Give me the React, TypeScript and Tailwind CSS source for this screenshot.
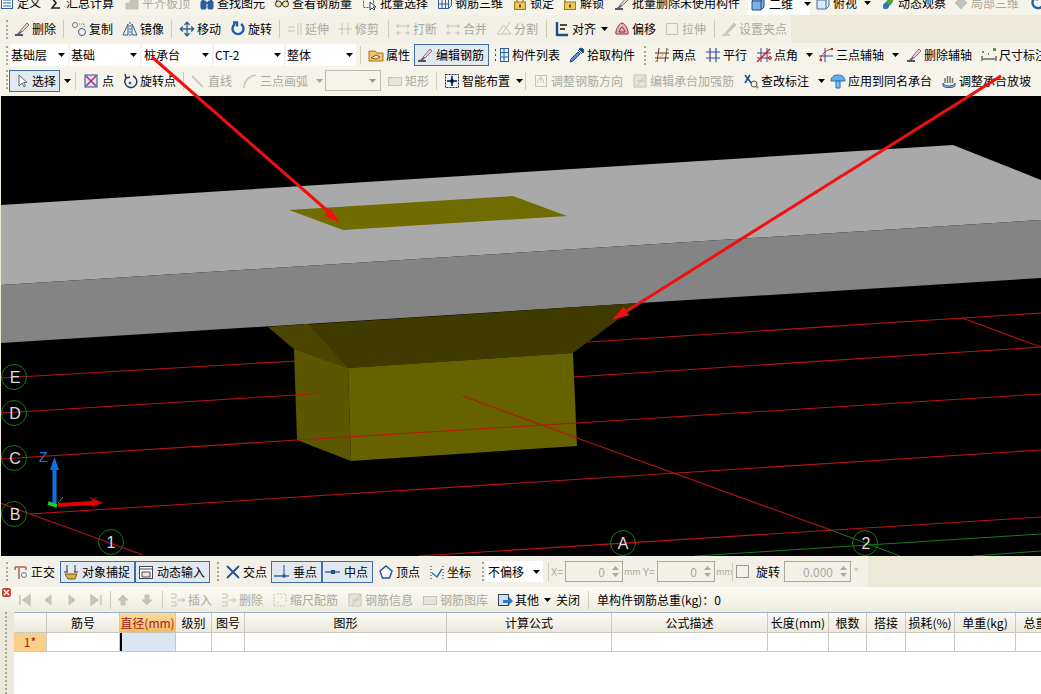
import React from "react";

const F = { fontFamily: '"Noto Sans CJK SC","Liberation Sans",sans-serif' };
const G = "#c4c4ba";

function Ic({ k = "doc", off }: { k?: string; off?: boolean }) {
  const a = off ? G : "#2b5f9e";
  const d = off ? G : "#222";
  return (
    <svg width="16" height="16" viewBox="0 0 16 16" className="shrink-0" fill="none" stroke={a} strokeWidth="1">
      {k === "doc" && <><rect x="2.5" y="2.5" width="11" height="11" fill="#fff" /><path d="M4 5h8M4 8h8M4 11h8" /></>}
      {k === "sigma" && <path d="M12 3H4l4 5-4 5h8" stroke="#222" strokeWidth="1.6" />}
      {k === "stairs" && <><path d="M2 14V8h4V5h4V2h4v12z" fill={G} stroke={G} /></>}
      {k === "bino" && <><rect x="2" y="6" width="5" height="8" rx="1" fill={a} /><rect x="9" y="6" width="5" height="8" rx="1" fill={a} /><path d="M4 6V3M12 6V3M7 8h2" strokeWidth="2" /></>}
      {k === "glass" && <><circle cx="4.5" cy="9" r="3" fill="#f3e7a0" stroke="#333" /><circle cx="11.5" cy="9" r="3" fill="#f3e7a0" stroke="#333" /><path d="M7 8h2M2 7l2-4M14 7l-2-4" stroke="#333" /></>}
      {k === "batch" && <><rect x="1.5" y="3.5" width="10" height="9" strokeDasharray="2 1" /><path d="M8 7v8l2-2 2 2 1-1-2-2h3z" fill="#fff" stroke="#345" /></>}
      {k === "bar3" && <path d="M1.5 4.5h10v9h-10zM1.5 4.5l3-3h10v9l-3 3M5 4.5v9M8.500 4.500v9M1.500 9h10" />}
      {k === "lock" && <><path d="M5 7V4.500a3 3 0 0 1 6 0V7" stroke="#a58a3c" strokeWidth="1.5" /><rect x="2.500" y="7" width="11" height="7.500" fill="#eec65a" stroke="#a07a22" /><rect x="7" y="9.500" width="2" height="3" fill="#70500c" stroke="none" /></>}
      {k === "unlock" && <><path d="M3 7V4.500a3 3 0 0 1 6 0" stroke="#a58a3c" strokeWidth="1.5" /><rect x="2.500" y="7" width="11" height="7.500" fill="#eec65a" stroke="#a07a22" /><rect x="7" y="9.500" width="2" height="3" fill="#70500c" stroke="none" /></>}
      {k === "brush" && <><path d="M1 14h8" stroke={d} strokeWidth="1.500" /><path d="M6 10l7-8 2 2-7 7z" fill={off ? G : "#e8d8b0"} stroke={off ? G : "#8a6a9a"} /><path d="M3 13l3-3 2 1-2 2z" fill={off ? G : "#7a50a0"} stroke="none" /></>}
      {k === "cube" && <><path d="M2 5l3-3h9v9l-3 3H2z" fill="#7fb0e0" stroke="#24507e" /><path d="M2 5h9v9M11 5l3-3" stroke="#24507e" /></>}
      {k === "cubel" && <><path d="M2 5l3-3h9v9l-3 3H2z" fill="#dce8f5" stroke="#47709a" /><path d="M2 5h9v9M11 5l3-3" stroke="#47709a" /></>}
      {k === "orbit" && <><path d="M3 13C4 7 9 3 14 2c0 5-4 10-10 12z" fill="#49a23e" stroke="none" /><circle cx="6" cy="11" r="3" fill="#3070c8" stroke="none" /><path d="M10 3l3 2" stroke="#e08820" strokeWidth="2" /></>}
      {k === "local" && <path d="M2 8l6-6 6 6-6 6z" fill={G} stroke={G} />}
      {k === "copy" && <><circle cx="4" cy="4" r="2.500" stroke="#777" /><circle cx="11" cy="11" r="3.500" stroke="#2b5f9e" /><path d="M8 3h5M13 3v4" stroke="#777" strokeDasharray="1 1" /></>}
      {k === "mirror" && <><path d="M8 1v14" strokeDasharray="2 1" stroke="#555" /><path d="M6 3L1 14h5zM10 3l5 11h-5z" /></>}
      {k === "move" && <path d="M8 1v14M1 8h14M8 1L5.500 4M8 1l2.500 3M8 15l-2.500-3M8 15l2.500-3M1 8l3-2.500M1 8l3 2.500M15 8l-3-2.500M15 8l-3 2.500" stroke="#33608f" strokeWidth="1.300" />}
      {k === "rot" && <path d="M5 3a5.500 5.500 0 1 0 6 0M3 1.500h4v4" stroke="#1f5fb0" strokeWidth="2.400" />}
      {k === "ext" && <path d="M1 6h7M1 10h7M11 2v12M14 2v12" stroke={G} />}
      {k === "trim" && <path d="M1 8h14M5 2v12M11 2v12" stroke={G} />}
      {k === "brk" && <path d="M1 12h5M10 12h5M1 5h14M3 3v4M13 3v4M3 10v4M13 10v4" stroke={G} />}
      {k === "split" && <path d="M1 13h14L8 4zM14 1L6 13" stroke={G} />}
      {k === "align" && <><path d="M3 1v14M3 14h11" stroke="#1a4e8a" strokeWidth="2.400" /><path d="M6 4h7M6 8h5" stroke="#111" strokeWidth="1.500" /></>}
      {k === "offs" && <path d="M8 2c3 0 7 8 6 11H2C1 10 5 2 8 2zM8 6c1 0 3 4 3 5H5c0-1 2-5 3-5z" fill="#e8b0b8" stroke="#8a3040" />}
      {k === "sqo" && <rect x="2.500" y="2.500" width="11" height="11" stroke={G} />}
      {k === "prop" && <><path d="M1 4h6l2 2h6v8H1z" fill="#f2c46e" stroke="#a8701c" /><path d="M3 11l5-3 4 2-4 2z" fill="#fff" stroke="#905010" /></>}
      {k === "list" && <><path d="M1 3h2M1 8h2M1 13h2" stroke="#444" strokeDasharray="1 1" strokeWidth="2" /><rect x="6.500" y="1.500" width="8" height="13" fill="#e8f0f8" /><path d="M7 5.500h7M7 10h7M10 2v12" /></>}
      {k === "pick" && <><path d="M9 5L2 12l-1 3 3-1 7-7z" fill="#4f92de" stroke="#1b4b86" /><path d="M9 3l4 4M10 2c1-1 3-1 4 0s1 3 0 4z" fill="#1b4b86" stroke="#1b4b86" /></>}
      {k === "two" && <><path d="M5 1L3 15M13 1l-2 14M1 6h14M1 11h14" stroke="#5a3a2a" /><path d="M1 15L15 2" stroke="#c8a040" /></>}
      {k === "par" && <path d="M5 1v14M11 1v14M1 5h14M1 11h14" stroke="#3a48a0" strokeWidth="1.200" />}
      {k === "ang" && <><path d="M5 1v14M11 1v14M1 6h14M1 11h14" stroke="#503a88" /><path d="M1 15L14 2" stroke="#d02020" strokeWidth="1.500" /><circle cx="14" cy="11" r="1.500" stroke="#d02020" /></>}
      {k === "three" && <><path d="M7 1v14M1 9h14" stroke="#304a90" /><path d="M2 14C3 7 8 3 14 2" stroke="#d02020" /><circle cx="14" cy="2" r="1.200" fill="#d02020" stroke="none" /><circle cx="3" cy="13" r="1.200" fill="#d02020" stroke="none" /></>}
      {k === "dim" && <><path d="M1 9v5M15 9v5M2 12h12" stroke="#222" /><rect x="1" y="4" width="2" height="2" fill="#4a9a4a" stroke="none" /><rect x="12" y="1" width="3" height="3" fill="#4a9a4a" stroke="none" /><rect x="7" y="6" width="1" height="2" fill="#4a9a4a" stroke="none" /></>}
      {k === "arrow" && <path d="M5 2v11l3-3 2 4 1.500-1-2-3.500H13z" fill="#fff" stroke="#667" />}
      {k === "pt" && <><rect x="2" y="2" width="12" height="12" fill="#dce4f4" stroke="#274a90" /><path d="M3 3l10 10M13 3L3 13" stroke="#b02a70" strokeWidth="1.500" /></>}
      {k === "rotp" && <><path d="M4 5a6 6 0 1 0 7-2M3 1l1 4 4-1" stroke="#233a58" strokeWidth="1.500" /><circle cx="8" cy="10" r="1" fill="#233a58" /></>}
      {k === "ln" && <><path d="M2 3l11 11" stroke={G} strokeWidth="1.500" /></>}
      {k === "arc" && <path d="M2 15C2 8 7 3 14 2" stroke={G} strokeWidth="1.500" />}
      {k === "rect" && <rect x="1.500" y="4.500" width="13" height="8" fill="#e4e4dc" stroke={G} />}
      {k === "smart" && <><rect x="1.500" y="1.500" width="13" height="13" stroke="#222" strokeDasharray="2 1" fill="#eef3fa" /><path d="M8 3v10M3 8h10" stroke="#1f4f90" strokeWidth="2" /><circle cx="8" cy="8" r="2" fill="#111" stroke="none" /></>}
      {k === "adj" && <><rect x="2.500" y="2.500" width="11" height="11" stroke={G} /><path d="M5 10a3 3 0 1 1 5 0M8 3v6" stroke={G} /></>}
      {k === "rein" && <><rect x="2" y="2" width="12" height="12" fill="#e4e4dc" stroke={G} /><path d="M5 13L13 3M5 8h8" stroke={G} /></>}
      {k === "edit" && <><path d="M2 2l7 9M7 2l-5 8" stroke="#1f4f90" strokeWidth="1.600" /><circle cx="11" cy="11" r="3" fill="#f1f1e0" stroke="#555" /><path d="M13 13l2 2" stroke="#b08020" strokeWidth="2" /></>}
      {k === "mush" && <><path d="M1 8c0-4 3-6 7-6s7 2 7 6z" fill="#5fb0ea" stroke="#2a6ca8" /><path d="M6 8h4v7H6z" fill="#7ac0f0" stroke="#2a6ca8" /></>}
      {k === "hand" && <><path d="M2 10c1 4 11 4 12 0v3c-1 2-11 2-12 0z" fill="#a8c8ec" stroke="#2a5c98" /><path d="M4 10V5M6.500 10V3M9 10V3M11.500 10V5" stroke="#777" strokeWidth="1.500" /></>}
      {k === "ortho" && <><path d="M2 3h11M6 3v12M2 3v3M13 3v3" stroke="#c08078" strokeWidth="2" /><circle cx="11" cy="11" r="2.500" stroke="#5a7a98" /></>}
      {k === "snap" && <><path d="M4 1v7M12 1v7M1 8h4M11 8h4" stroke="#333" /><path d="M2 10h12l-2 5H5z" fill="#d8b040" stroke="#806010" /></>}
      {k === "dyn" && <><rect x="1.500" y="2.500" width="13" height="12" fill="#fff" stroke="#445" /><path d="M2 5h12" stroke="#445" /><path d="M4 8h8v5H4z" fill="#e8e8e0" stroke="#445" /></>}
      {k === "x" && <path d="M2 2l12 12M14 2L2 14" stroke="#1f5098" strokeWidth="1.800" />}
      {k === "tee" && <><path d="M0 12h15" stroke="#1f5098" strokeWidth="1.300" /><path d="M10 1v11" stroke="#1f5098" /><rect x="8.500" y="10.500" width="3" height="3" fill="#1f5098" stroke="none" /></>}
      {k === "mid" && <><path d="M0 8h15" stroke="#1f5098" strokeWidth="1.300" /><rect x="6" y="6" width="4" height="4" fill="#1f5098" stroke="none" /></>}
      {k === "pent" && <path d="M8 2l6 5-2.500 7h-7L2 7z" stroke="#1f5098" strokeWidth="1.400" fill="#fff" />}
      {k === "coord" && <><path d="M3 9l5 4 5-8" stroke="#1f6cb0" strokeWidth="1.500" /><path d="M2 2v13M14 2v13" stroke="#333" strokeDasharray="1 2" /></>}
      {k === "first" && <path d="M3 3v10M13 3L6 8l7 5z" stroke={G} fill={G} strokeWidth="1.500" />}
      {k === "prev" && <path d="M11 3L5 8l6 5z" stroke={G} fill={G} />}
      {k === "next" && <path d="M5 3l6 5-6 5z" stroke={G} fill={G} />}
      {k === "last" && <path d="M13 3v10M3 3l7 5-7 5z" stroke={G} fill={G} strokeWidth="1.500" />}
      {k === "up" && <path d="M8 3l5 5h-3v5H6V8H3z" stroke={G} fill={G} />}
      {k === "down" && <path d="M8 13l5-5h-3V3H6v5H3z" stroke={G} fill={G} />}
      {k === "ins" && <path d="M1 2h5v4H1M1 10h5v4H1M7 8h8M12 6l3 2-3 2" stroke={G} />}
      {k === "scale" && <path d="M2 2v12h12M5 2h9v9M5 11l2-2M9 6l2-2" stroke={G} strokeDasharray="2 1" />}
      {k === "other" && <><rect x="1.500" y="2.500" width="10" height="11" fill="#cfe0f2" stroke="#345" /><path d="M6 8h6V5l4 4-4 4v-2H6z" fill="#2a78d0" stroke="none" /></>}
    </svg>
  );
}

function Caret({ c = "" }: { c?: string }) {
  return (
    <svg width="7" height="4" viewBox="0 0 7 4" className={`shrink-0 ${c}`}>
      <path d="M0 0h7L3.500 4z" fill="currentColor" />
    </svg>
  );
}

function Sep({ c = "" }: { c?: string }) {
  return <div className={`h-[18px] w-px shrink-0 bg-[#cfccbc] ${c}`} />;
}
function Grip({ c = "" }: { c?: string }) {
  return <div className={`h-[19px] w-[3px] shrink-0 border-l-2 border-dotted border-[#a8a698] ${c}`} />;
}

function B({ t, k, off, on, caret, w, p = "", gap = "gap-[2px]" }: { t?: string; k?: string; off?: boolean; on?: boolean; caret?: string; w: string; p?: string; gap?: string }) {
  return (
    <div className={`flex h-[22px] shrink-0 items-center whitespace-nowrap ${gap} ${w} ${p} ${on ? "border border-[#3f6ea8] bg-[#e2e8ef] pl-[2px]" : ""} ${off ? "text-[#a9a9a0]" : "text-black"}`}>
      {k && <Ic k={k} off={off} />}
      {t && <span>{t}</span>}
      {caret && <Caret c={caret} />}
    </div>
  );
}

function Sel({ t, w, p = "pl-[1px]" }: { t: string; w: string; p?: string }) {
  return (
    <div className={`mr-[2px] flex h-[22px] shrink-0 items-center justify-between bg-white pr-[3px] text-black ${p} ${w}`}>
      <span>{t}</span>
      <Caret />
    </div>
  );
}

function Spin({ v, w }: { v: string; w: string }) {
  return (
    <div className={`flex h-[21px] shrink-0 items-center justify-end border border-[#a9a99f] pr-[3px] text-[#a9a9a0] ${w}`}>
      <span className="mr-[7px]">{v}</span>
      <span className="flex flex-col gap-[3px]"><Caret c="rotate-180" /><Caret /></span>
    </div>
  );
}

const cols: [string, string][] = [
  ["筋号", "w-[73px]"], ["直径(mm)", "w-[56px]"], ["级别", "w-[36px]"], ["图号", "w-[33px]"],
  ["图形", "w-[202px]"], ["计算公式", "w-[165px]"], ["公式描述", "w-[156px]"], ["长度(mm)", "w-[61px]"],
  ["根数", "w-[38px]"], ["搭接", "w-[39px]"], ["损耗(%)", "w-[49px]"], ["单重(kg)", "w-[61px]"], ["总重", "w-[40px]"],
];

export default function App() {
  return (
    <div className="relative flex h-[694px] w-[1041px] flex-col overflow-hidden bg-[#ece9d8] text-[12px] leading-none" style={F}>
      <div className="flex h-[15px] shrink-0 items-end overflow-hidden bg-[#f6f4ea] pb-[1px]">
        <B t="定义" k="doc" w="ml-[-1px] w-[49px]" />
        <B t="汇总计算" k="sigma" w="w-[76px]" />
        <B t="平齐板顶" k="stairs" off w="w-[75px]" />
        <B t="查找图元" k="bino" w="w-[75px]" />
        <B t="查看钢筋量" k="glass" w="w-[88px]" />
        <B t="批量选择" k="batch" w="w-[75px]" />
        <B t="钢筋三维" k="bar3" w="w-[75px]" />
        <B t="锁定" k="lock" w="w-[50px]" />
        <B t="解锁" k="unlock" w="w-[52px]" />
        <B t="批量删除未使用构件" k="brush" w="w-[134px]" />
        <div className="mb-[-1px] mr-[5px] flex h-[22px] w-[62px] shrink-0 items-center gap-[3px] whitespace-nowrap bg-white pl-[2px] text-black"><Ic k="cube" /><span>二维</span><Caret c="ml-[8px]" /></div>
        <B t="俯视" k="cubel" caret="ml-[5px]" w="w-[65px]" />
        <B t="动态观察" k="orbit" w="w-[73px]" />
        <B t="局部三维" k="local" off w="w-[77px]" />
        <B k="rot" w="w-[16px]" />
      </div>

      <div className="flex h-[28px] shrink-0 items-center">
        <div className="flex h-full w-[791px] shrink-0 items-center bg-[#f3f1e7] pl-[6px]">
          <Grip c="mr-[5px]" />
          <B t="删除" k="brush" w="w-[49px]" />
          <Sep c="mr-[7px]" />
          <B t="复制" k="copy" w="w-[51px]" />
          <B t="镜像" k="mirror" w="w-[49px]" />
          <Sep c="mr-[7px]" />
          <B t="移动" k="move" w="w-[51px]" />
          <B t="旋转" k="rot" w="w-[49px]" />
          <Sep c="mr-[7px]" />
          <B t="延伸" k="ext" off w="w-[50px]" />
          <B t="修剪" k="trim" off w="w-[51px]" />
          <Sep c="mr-[6px]" />
          <B t="打断" k="brk" off w="w-[50px]" />
          <B t="合并" k="brk" off w="w-[51px]" />
          <B t="分割" k="split" off w="w-[50px]" />
          <Sep c="mr-[7px]" />
          <B t="对齐" k="align" caret="ml-[3px]" w="w-[60px]" />
          <B t="偏移" k="offs" w="w-[50px]" />
          <B t="拉伸" k="sqo" off w="w-[50px]" />
          <Sep c="mr-[6px]" />
          <B t="设置夹点" k="brush" off w="w-[66px]" />
        </div>
      </div>

      <div className="flex h-[24px] shrink-0 items-center overflow-hidden bg-[#f5f3ea] pl-[6px]">
        <Grip c="mr-[1px]" />
        <Sel t="基础层" w="w-[58px]" />
        <Sel t="基础" w="w-[70px]" />
        <Sel t="桩承台" p="pl-[2px]" w="w-[70px]" />
        <Sel t="CT-2" w="w-[70px]" />
        <Sel t="整体" w="w-[70px]" />
        <Sep c="ml-[2px] mr-[7px]" />
        <B t="属性" k="prop" w="w-[46px]" />
        <B t="编辑钢筋" k="brush" on gap="gap-[3px]" w="mr-[5px] w-[75px]" />
        <B t="构件列表" k="list" w="w-[75px]" />
        <B t="拾取构件" k="pick" w="w-[75px]" />
        <Grip c="mr-[7px]" />
        <B t="两点" k="two" w="w-[51px]" />
        <B t="平行" k="par" w="w-[51px]" />
        <B t="点角" k="ang" caret="ml-[6px]" w="w-[62px]" />
        <B t="三点辅轴" k="three" caret="ml-[6px]" w="w-[88px]" />
        <B t="删除辅轴" k="brush" w="w-[75px]" />
        <B t="尺寸标注" k="dim" w="w-[70px]" />
      </div>

      <div className="flex h-[29px] shrink-0 items-start overflow-hidden bg-[#f5f3ea] pl-[6px] pt-[3px]">
        <Grip />
        <B t="选择" k="arrow" on p="pl-[4px]" w="w-[51px]" />
        <div className="flex h-[22px] w-[15px] shrink-0 items-center justify-center"><Caret /></div>
        <Sep c="mr-[7px] mt-[2px]" />
        <B t="点" k="pt" gap="gap-[3px]" w="w-[39px]" />
        <B t="旋转点" k="rotp" w="w-[61px]" />
        <Sep c="mr-[6px] mt-[2px]" />
        <B t="直线" k="ln" off w="w-[52px]" />
        <B t="三点画弧" k="arc" off caret="ml-[6px]" w="w-[83px]" />
        <div className="mr-[6px] flex h-[21px] w-[56px] shrink-0 items-center justify-end border border-[#bcbcb0] pr-[4px] text-[#999]"><Caret /></div>
        <B t="矩形" k="rect" off w="w-[49px]" />
        <Sep c="mr-[7px] mt-[2px]" />
        <B t="智能布置" k="smart" caret="ml-[4px]" w="w-[81px]" />
        <Sep c="mr-[7px] mt-[2px]" />
        <B t="调整钢筋方向" k="adj" off w="w-[99px]" />
        <B t="编辑承台加强筋" k="rein" off w="w-[111px]" />
        <B t="查改标注" k="edit" caret="ml-[7px]" w="w-[87px]" />
        <B t="应用到同名承台" k="mush" w="w-[111px]" />
        <B t="调整承台放坡" k="hand" w="w-[92px]" />
      </div>

      <div className="ml-[1px] h-[460px] shrink-0 bg-black">
        <svg width="1040" height="460" viewBox="1 96 1040 460" className="block">
          <g stroke="#b81414" strokeWidth="1.100" fill="none">
            <path d="M0 378L296 361M588 342L962 318L1041 313" />
            <path d="M0 413L296 395M573 377L1041 347" />
            <path d="M962 318L1041 347" />
            <path d="M0 459L297 440M577 423L1041 394" />
            <path d="M30 514L1041 450" />
            <path d="M0 503L143 555" />
            <path d="M577 438L828 529" />
            <path d="M418 556L1041 517" />
          </g>
          <g stroke="#1a7a1a" fill="none" strokeWidth="1">
            <circle cx="14" cy="377" r="12.500" />
            <circle cx="14" cy="413" r="12.500" />
            <circle cx="14" cy="458" r="12.500" />
            <circle cx="14" cy="514" r="12.500" />
            <circle cx="111" cy="542" r="12.500" />
            <circle cx="623" cy="543" r="12.500" />
            <circle cx="865" cy="543" r="12.500" />
            <path d="M695 556L1041 534M973 556L1041 551M828 529L900 556" />
          </g>
          <g fill="#dcdcdc" fontSize="16" fontFamily="Liberation Sans, sans-serif" textAnchor="middle">
            <text x="15" y="383">E</text>
            <text x="15" y="419">D</text>
            <text x="15" y="464">C</text>
            <text x="15" y="520">B</text>
            <text x="111" y="548">1</text>
            <text x="623" y="549">A</text>
            <text x="866" y="549">2</text>
          </g>

          <polygon points="0,205 953,145 1041,180 1041,220 0,285" fill="#a9a9a9" />
          <polygon points="0,285 1041,220 1041,278 0,343" fill="#848484" />
          <polygon points="289,210 513,196 567,216 343,230" fill="#716c00" />
          <polygon points="268,327 640,303 573,353 348,368 294,349" fill="#3f3b00" />
          <polygon points="268,327 308,324 348,368 294,349" fill="#4a4600" />
          <polygon points="294,349 348,368 351,461 297,440" fill="#5b5700" />
          <polygon points="348,368 573,353 577,446 351,461" fill="#666200" />
          <g stroke="#b81414" strokeWidth="1.100" fill="none">
            <path d="M296 395L320 393M297 440L577 423M463 396L577 438" />
          </g>

          <text x="39" y="462" fill="#2a7ae0" fontSize="14" fontFamily="Liberation Sans, sans-serif">Z</text>
          <path d="M54.500 505V466" stroke="#1070e0" strokeWidth="4" />
          <polygon points="54.500,457 50,470 59,470" fill="#1070e0" />
          <path d="M58 505L93 503" stroke="#e00000" strokeWidth="4" />
          <polygon points="103,503 92,498 92,507" fill="#e00000" />
          <path d="M48 503L57 506" stroke="#20d020" strokeWidth="3.500" />
          <path d="M58 503L63 497" stroke="#20a020" strokeWidth="1" />
          <path d="M89 497L97 502M97 497L90 502" stroke="#a01010" strokeWidth="1" />
        </svg>
      </div>

      <div className="flex h-[31px] shrink-0">
        <div className="flex h-full w-[868px] shrink-0 items-center overflow-hidden bg-[#f3f1e7] pl-[6px]">
          <Grip c="mr-[4px]" />
          <B t="正交" k="ortho" w="w-[47px]" />
          <B t="对象捕捉" k="snap" on gap="gap-[3px]" w="w-[75px]" />
          <B t="动态输入" k="dyn" on gap="gap-[3px]" w="w-[75px]" />
          <Grip c="ml-[7px] mr-[5px]" />
          <B t="交点" k="x" w="w-[46px]" />
          <B t="垂点" k="tee" on gap="gap-[3px]" w="w-[51px]" />
          <B t="中点" k="mid" on gap="gap-[3px]" w="w-[51px]" />
          <B t="顶点" k="pent" p="ml-[5px]" w="w-[50px]" />
          <B t="坐标" k="coord" p="ml-[1px]" w="w-[50px]" />
          <Grip c="ml-[3px] mr-[1px]" />
          <div className="flex h-[21px] w-[57px] shrink-0 items-center justify-between bg-white pl-[2px] pr-[3px] text-black"><span>不偏移</span><Caret /></div>
          <Sep c="ml-[5px] mr-[2px]" />
          <span className="mr-[2px] w-[12px] shrink-0 text-[11px] text-[#a9a9a0]">X=</span>
          <Spin v="0" w="w-[58px]" />
          <span className="ml-[1px] mr-[7px] w-[12px] shrink-0 text-[9px] text-[#a9a9a0]">mm</span>
          <span className="mr-[2px] w-[12px] shrink-0 text-[11px] text-[#a9a9a0]">Y=</span>
          <Spin v="0" w="w-[58px]" />
          <span className="ml-[1px] w-[12px] shrink-0 text-[9px] text-[#a9a9a0]">mm</span>
          <Sep c="ml-[4px]" />
          <div className="ml-[3px] size-[13px] shrink-0 border border-[#999]" />
          <span className="ml-[7px] w-[24px] shrink-0 text-black">旋转</span>
          <div className="ml-[4px]"><Spin v="0.000" w="w-[67px]" /></div>
          <span className="ml-[3px] text-[#a9a9a0]">°</span>
        </div>
      </div>

      <div className="flex h-[25px] shrink-0 items-center bg-linear-to-b from-[#fbfaf5] to-[#efecdf] pl-[2px]">
        <div className="mr-[6px] mt-[1px] flex size-[9px] shrink-0 items-center justify-center self-start rounded-[2px] bg-[#d0402e] text-white">
          <svg width="7" height="7" viewBox="0 0 7 7"><path d="M1 1l5 5M6 1L1 6" stroke="#fff" strokeWidth="1.500" /></svg>
        </div>
        <B k="first" w="w-[23px]" />
        <B k="prev" w="w-[24px]" />
        <B k="next" w="w-[24px]" />
        <B k="last" w="w-[22px]" />
        <Sep c="mr-[4px]" />
        <B k="up" w="w-[24px]" />
        <B k="down" w="w-[23px]" />
        <Sep c="mr-[7px]" />
        <B t="插入" k="ins" off w="w-[51px]" />
        <B t="删除" k="ins" off w="w-[51px]" />
        <B t="缩尺配筋" k="scale" off w="w-[75px]" />
        <B t="钢筋信息" k="rein" off w="w-[75px]" />
        <B t="钢筋图库" k="rect" off w="w-[75px]" />
        <B t="其他" k="other" caret="ml-[3px]" w="w-[59px]" />
        <span className="w-[32px] shrink-0 text-black">关闭</span>
        <Sep c="mr-[8px]" />
        <span className="whitespace-nowrap text-black">单构件钢筋总重(kg)：0</span>
      </div>

      <div className="flex min-h-0 flex-1">
        <div className="w-[14px] shrink-0 pl-[5px]">
          <div className="h-full w-[2px] border-l-2 border-dotted border-[#a8a698]" />
        </div>
        <div className="flex min-w-0 flex-1 flex-col overflow-hidden border-t border-[#9fb0c0] bg-white">
          <div className="flex h-[20px] shrink-0 bg-linear-to-b from-[#fbfaf5] to-[#ebe8da] text-black">
            <div className="w-[33px] shrink-0 border-b border-r border-[#c9c9c0]" />
            {cols.map(([t, w]) => (
              <div key={t} className={`flex shrink-0 items-center justify-center whitespace-nowrap border-b border-r border-[#c9c9c0] ${w} ${t.startsWith("直径") ? "bg-linear-to-b from-[#fbdc9d] to-[#f6bb62] text-[#a02020]" : ""}`}>{t}</div>
            ))}
          </div>
          <div className="flex h-[19px] shrink-0 border-b border-[#c9c9c0]">
            <div className="flex w-[33px] shrink-0 items-center justify-center border-r border-[#c9c9c0] bg-[#f9cf8a] text-[#a02020]">1*</div>
            {cols.map(([t, w]) => (
              <div key={t} className={`shrink-0 border-r border-[#c9c9c0] ${w} ${t.startsWith("直径") ? "border-l-2 border-l-black bg-[#dce6f3]" : ""}`} />
            ))}
          </div>
        </div>
      </div>

      <svg width="1041" height="694" className="pointer-events-none absolute left-0 top-0">
        <path d="M152 57L330 213" stroke="#f01010" strokeWidth="3" />
        <polygon points="340,223 330.300,208.200 323.700,215.800" fill="#f01010" />
        <path d="M1001 76L622 314" stroke="#f01010" strokeWidth="3" />
        <polygon points="612,320 629,315.200 623.700,306.800" fill="#f01010" />
      </svg>
    </div>
  );
}
